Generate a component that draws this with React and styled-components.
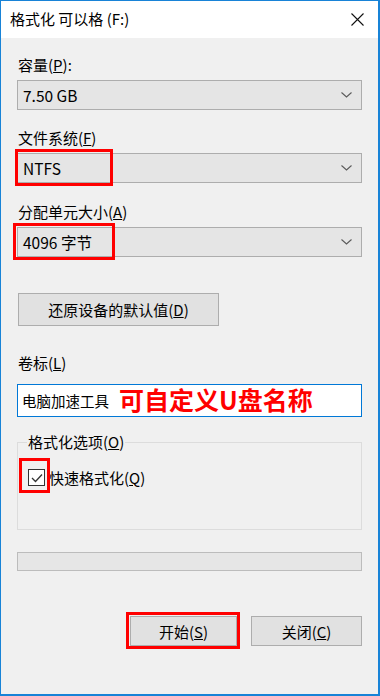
import React from "react";
import styled, { createGlobalStyle } from "styled-components";

const GlobalStyle = createGlobalStyle`
  html, body {
    margin: 0;
    padding: 0;
    background: #f0f0f0;
  }
  body {
    font-family: "Noto Sans CJK SC", "Noto Sans", sans-serif;
    color: #000;
  }
`;

const Window = styled.div`
  width: 380px;
  height: 696px;
  box-sizing: border-box;
  border: 1px solid #1883d7;
  border-right-width: 2px;
  border-bottom-width: 2px;
  display: flex;
  flex-direction: column;
  background: #f0f0f0;
`;

const TitleBar = styled.div`
  height: 37px;
  flex: none;
  background: #fff;
  display: flex;
  align-items: center;
  justify-content: space-between;
  padding: 0 14px 0 9px;
`;

const Title = styled.span`
  font-size: 15px;
  line-height: 20px;
  margin-top: -2px;
`;

const Body = styled.div`
  flex: 1;
  padding: 17px 16px 0 16px;
  display: flex;
  flex-direction: column;
`;

const Label = styled.div`
  font-size: 15px;
  line-height: 20px;
  height: 20px;
  margin-top: ${(p) => p.$top || 0}px;
  margin-left: 1px;
`;

const Combo = styled.div`
  position: relative;
  height: 30px;
  box-sizing: border-box;
  margin-top: 5px;
  border: 1px solid #adadad;
  background: #e5e5e5;
  display: flex;
  align-items: center;
  justify-content: space-between;
  padding: 0 9px 0 5px;
  font-size: 15.5px;
`;

const Highlight = styled.div`
  position: absolute;
  left: ${(p) => p.$l}px;
  top: ${(p) => p.$t}px;
  width: ${(p) => p.$w}px;
  height: ${(p) => p.$h}px;
  box-sizing: border-box;
  border: 3px solid #ff0000;
  pointer-events: none;
`;

const Button = styled.div`
  position: relative;
  width: ${(p) => p.$w}px;
  height: ${(p) => p.$h || 30}px;
  box-sizing: border-box;
  border: 1px solid #adadad;
  background: #e1e1e1;
  display: flex;
  align-items: center;
  justify-content: center;
  font-size: 15px;
`;

const RestoreRow = styled.div`
  margin-top: 36px;
  padding-left: 1px;
`;

const TextField = styled.div`
  margin-top: 11px;
  height: 33px;
  box-sizing: border-box;
  border: 1px solid #0078d7;
  background: #fff;
  display: flex;
  align-items: center;
  padding-left: 4px;
  gap: 10px;
`;

const FieldText = styled.span`
  font-size: 14.5px;
`;

const Annotation = styled.span`
  color: #ff0000;
  font-size: 25px;
  font-weight: 700;
  line-height: 1;
  margin-top: -2px;
`;

const Group = styled.fieldset`
  margin: 16px 0 0 0;
  height: 97px;
  box-sizing: border-box;
  border: 1px solid #dcdcdc;
  padding: 0 10px;
`;

const Legend = styled.legend`
  font-size: 15px;
  line-height: 18px;
  padding: 0 1px;
  margin-left: -1px;
`;

const CheckRow = styled.div`
  display: flex;
  align-items: center;
  gap: 4px;
  margin-top: 16px;
  font-size: 15px;
`;

const CheckBox = styled.div`
  position: relative;
  width: 17px;
  height: 17px;
  box-sizing: border-box;
  border: 1px solid #333;
  background: #fff;
  display: flex;
  align-items: center;
  justify-content: center;
`;

const Progress = styled.div`
  margin-top: 22px;
  height: 19px;
  box-sizing: border-box;
  border: 1px solid #bcbcbc;
  background: #e6e6e6;
`;

const ButtonRow = styled.div`
  margin-top: 45px;
  display: flex;
  justify-content: flex-end;
  gap: 14px;
`;

const Chevron = () => (
  <svg width="11" height="6" viewBox="0 0 11 6">
    <polyline points="0.5,0.5 5.5,5 10.5,0.5" fill="none" stroke="#5a5a5a" strokeWidth="1.1" />
  </svg>
);

const CloseIcon = () => (
  <svg width="13" height="13" viewBox="0 0 13 13">
    <path d="M0.5 0.5 L12.5 12.5 M12.5 0.5 L0.5 12.5" stroke="#111" strokeWidth="1.1" />
  </svg>
);

const CheckMark = () => (
  <svg width="12" height="10" viewBox="0 0 12 10">
    <polyline points="1,5 4.5,8.5 11,1.5" fill="none" stroke="#333" strokeWidth="1.3" />
  </svg>
);

function App() {
  return (
    <>
      <GlobalStyle />
      <Window>
        <TitleBar>
          <Title>格式化 可以格 (F:)</Title>
          <CloseIcon />
        </TitleBar>
        <Body>
          <Label>
            容量(<u>P</u>):
          </Label>
          <Combo>
            <span>7.50 GB</span>
            <Chevron />
          </Combo>

          <Label $top={18}>
            文件系统(<u>F</u>)
          </Label>
          <Combo>
            <span>NTFS</span>
            <Chevron />
            <Highlight $l={-3} $t={-5} $w={98} $h={37} />
          </Combo>

          <Label $top={19}>
            分配单元大小(<u>A</u>)
          </Label>
          <Combo>
            <span>4096 字节</span>
            <Chevron />
            <Highlight $l={-5} $t={-5} $w={102} $h={37} />
          </Combo>

          <RestoreRow>
            <Button $w={201} $h={33}>
              还原设备的默认值(<u>D</u>)
            </Button>
          </RestoreRow>

          <Label $top={27}>
            卷标(<u>L</u>)
          </Label>
          <TextField>
            <FieldText>电脑加速工具</FieldText>
            <Annotation>可自定义U盘名称</Annotation>
          </TextField>

          <Group>
            <Legend>
              格式化选项(<u>O</u>)
            </Legend>
            <CheckRow>
              <CheckBox>
                <CheckMark />
                <Highlight $l={-10} $t={-12} $w={31} $h={35} />
              </CheckBox>
              <span>
                快速格式化(<u>Q</u>)
              </span>
            </CheckRow>
          </Group>

          <Progress />

          <ButtonRow>
            <Button $w={107}>
              开始(<u>S</u>)
              <Highlight $l={-5} $t={-5} $w={114} $h={37} />
            </Button>
            <Button $w={111}>
              关闭(<u>C</u>)
            </Button>
          </ButtonRow>
        </Body>
      </Window>
    </>
  );
}

export default App;
